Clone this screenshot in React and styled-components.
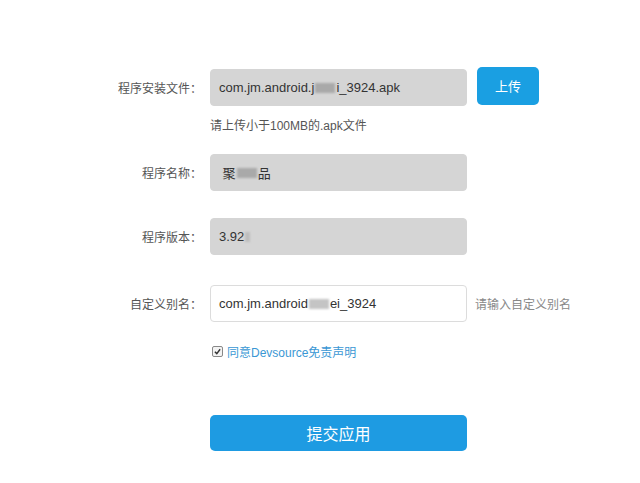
import React from "react";
import styled, { createGlobalStyle } from "styled-components";

const GlobalStyle = createGlobalStyle`
  html, body {
    margin: 0;
    padding: 0;
    background: #ffffff;
    font-family: "Liberation Sans", "Noto Sans CJK SC", sans-serif;
  }
`;

const Pagina = styled.div`
  width: 640px;
  height: 483px;
  padding-top: 69px;
  box-sizing: border-box;
  background: #fff;
`;

const Linha = styled.div`
  display: grid;
  grid-template-columns: 204px 257px auto;
  column-gap: 6px;
  align-items: center;
  margin-top: ${(props) => props.topo || 0}px;
`;

const Rotulo = styled.div`
  text-align: right;
  font-size: 12px;
  color: #555;
  padding-right: 2px;
`;

const Campo = styled.div`
  display: flex;
  align-items: center;
  height: 37px;
  box-sizing: border-box;
  padding-left: 8px;
  border-radius: 4px;
  font-size: 13px;
  color: #333;
  background: ${(props) => (props.branco ? "#ffffff" : "#d5d5d5")};
  border: 1px solid ${(props) => (props.branco ? "#dcdcdc" : "#d5d5d5")};
  white-space: nowrap;
`;

const Borrado = styled.span`
  display: inline-block;
  width: ${(props) => props.largura}px;
  height: 10px;
  background: ${(props) => props.cor || "#a9a9a9"};
  filter: blur(1.2px);
  margin: 0 1px;
`;

const BotaoUpload = styled.button`
  width: 62px;
  height: 38px;
  margin-left: 4px;
  margin-top: -4px;
  border: none;
  border-radius: 5px;
  background: #1a9fe2;
  color: #fff;
  font-size: 13px;
  font-family: inherit;
`;

const Dica = styled.div`
  grid-column: 2 / 4;
  font-size: 12px;
  color: #555;
  margin-top: 10px;
`;

const DicaLateral = styled.div`
  font-size: 12px;
  color: #888;
  padding-left: 2px;
`;

const Concordo = styled.label`
  grid-column: 2 / 4;
  display: flex;
  align-items: center;
  gap: 4px;
  font-size: 12px;
  color: #3a97d4;
  padding-left: 2px;
`;

const Caixa = styled.span`
  display: inline-flex;
  align-items: center;
  justify-content: center;
  width: 9px;
  height: 9px;
  border: 1px solid #888;
  border-radius: 2px;
  background: #f3f3f3;
`;

const BotaoEnviar = styled.button`
  grid-column: 2;
  height: 36px;
  border: none;
  border-radius: 5px;
  background: #1e9be2;
  color: #fff;
  font-size: 16px;
  font-family: inherit;
`;

function App() {
  return (
    <Pagina>
      <GlobalStyle />
      <Linha>
        <Rotulo>程序安装文件：</Rotulo>
        <Campo>
          com.jm.android.j<Borrado largura={20} />i_3924.apk
        </Campo>
        <BotaoUpload>上传</BotaoUpload>
        <span />
        <Dica>请上传小于100MB的.apk文件</Dica>
      </Linha>
      <Linha topo={21}>
        <Rotulo>程序名称：</Rotulo>
        <Campo>
          &nbsp;聚<Borrado largura={20} />品
        </Campo>
      </Linha>
      <Linha topo={27}>
        <Rotulo>程序版本：</Rotulo>
        <Campo>
          3.92<Borrado largura={5} cor="#bdbdbd" />
        </Campo>
      </Linha>
      <Linha topo={30}>
        <Rotulo>自定义别名：</Rotulo>
        <Campo branco>
          com.jm.android<Borrado largura={20} cor="#c4c4c4" />ei_3924
        </Campo>
        <DicaLateral>请输入自定义别名</DicaLateral>
      </Linha>
      <Linha topo={21}>
        <span />
        <Concordo>
          <Caixa>
            <svg width="7" height="7" viewBox="0 0 8 8">
              <path d="M1 4.2 L3.2 6.4 L7 1.4" stroke="#333" strokeWidth="1.6" fill="none" />
            </svg>
          </Caixa>
          同意Devsource免责声明
        </Concordo>
      </Linha>
      <Linha topo={55}>
        <span />
        <BotaoEnviar>提交应用</BotaoEnviar>
      </Linha>
    </Pagina>
  );
}

export default App;
